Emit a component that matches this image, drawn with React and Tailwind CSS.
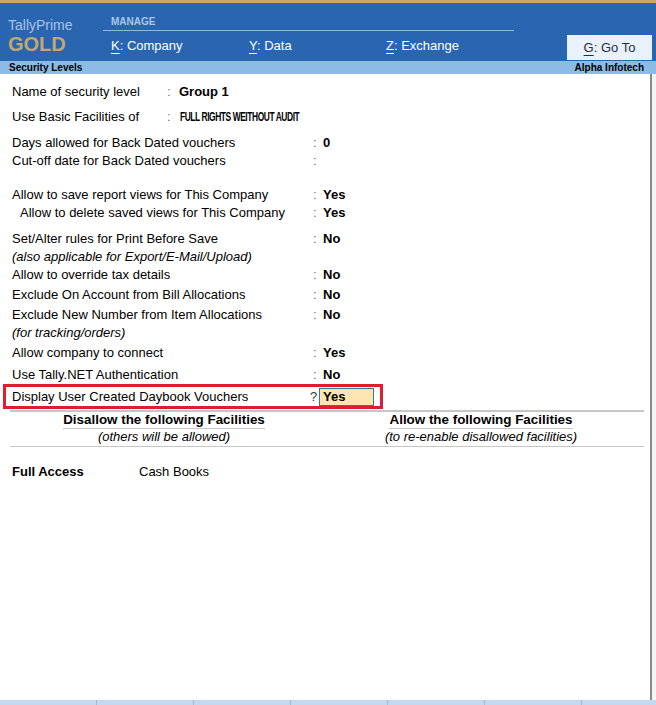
import React from "react";

const F = { fontFamily: '"Liberation Sans", Arial, sans-serif' };

function Key({ k, label, className = "" }) {
  return (
    <span className={"text-[13px] " + className}>
      <span className="underline underline-offset-[3px] decoration-[1px]">{k}</span>
      <span>:</span> {label}
    </span>
  );
}

function Row({ label, value, h = "h-[18px]", mt = "", indent = false }) {
  return (
    <div className={`flex items-center ${h} ${mt}`}>
      <div className={`w-[301px] whitespace-nowrap ${indent ? "pl-[20px]" : "pl-[12px]"}`}>{label}</div>
      <div className="w-[20px] text-gray-500 pl-[12px]">:</div>
      <div className="font-bold pl-[2px]">{value}</div>
    </div>
  );
}

export default function App() {
  return (
    <div style={F} className="w-[656px] h-[705px] bg-white text-[13px] text-black flex flex-col overflow-hidden">
      {/* gold top line */}
      <div className="h-[3px] bg-[#c8a865]" />
      {/* header */}
      <div className="h-[58px] bg-[#2a66b0] flex">
        <div className="w-[103px] pl-[8px] pt-[14px] flex flex-col">
          <div className="text-[14px] leading-[16px] text-[#a9c3e6]">TallyPrime</div>
          <div className="text-[20px] leading-[22px] font-bold text-[#c2a86e]">GOLD</div>
        </div>
        <div className="flex flex-col pt-[11px]">
          <div className="text-[10px] font-bold text-[#a9c6ec] pl-[8px] h-[17px] leading-[16px] w-[411px] border-b border-[#8cb8e8]">MANAGE</div>
          <div className="flex text-white pt-[5px]">
            <Key k="K" label="Company" className="w-[146px] pl-[8px]" />
            <Key k="Y" label="Data" className="w-[137px]" />
            <Key k="Z" label="Exchange" />
          </div>
        </div>
        <div className="flex-1" />
        <div className="flex flex-col justify-end pb-[1px] pr-[4px]">
          <div className="w-[85px] h-[25px] bg-[#e9f1fb] text-[#1f2f45] flex items-center justify-center">
            <Key k="G" label="Go To" />
          </div>
        </div>
      </div>
      {/* light bar */}
      <div className="h-[13px] bg-[#8cbbe5] flex items-center justify-between px-[9px] pr-[12px] text-[10px] font-bold leading-none">
        <span>Security Levels</span>
        <span>Alpha Infotech</span>
      </div>
      {/* body */}
      <div className="flex-1 flex">
        <div className="w-[652px] border-r-2 border-[#8a8a8a] pt-[9px] flex flex-col">
          <div className="flex items-center h-[18px]">
            <div className="w-[167px] pl-[12px]">Name of security level</div>
            <div className="w-[12px] text-gray-500">:</div>
            <div className="font-bold">Group 1</div>
          </div>
          <div className="flex items-center h-[18px] mt-[7px]">
            <div className="w-[167px] pl-[12px]">Use Basic Facilities of</div>
            <div className="w-[13px] text-gray-500">:</div>
            <div className="font-bold text-[12px] tracking-[-0.6px] inline-block origin-left scale-x-[0.7] whitespace-nowrap">FULL RIGHTS WEITHOUT AUDIT</div>
          </div>
          <Row label="Days allowed for Back Dated vouchers" value="0" mt="mt-[8px]" />
          <Row label="Cut-off date for Back Dated vouchers" value="" />
          <Row label="Allow to save report views for This Company" value="Yes" mt="mt-[16px]" />
          <Row label="Allow to delete saved views for This Company" value="Yes" indent />
          <Row label="Set/Alter rules for Print Before Save" value="No" mt="mt-[8px]" />
          <div className="h-[17px] flex items-center pl-[12px] italic">(also applicable for Export/E-Mail/Upload)</div>
          <Row label="Allow to override tax details" value="No" h="h-[20px]" />
          <Row label="Exclude On Account from Bill Allocations" value="No" h="h-[20px]" />
          <Row label="Exclude New Number from Item Allocations" value="No" h="h-[20px]" />
          <div className="h-[15px] flex items-center pl-[12px] italic">(for tracking/orders)</div>
          <Row label="Allow company to connect" value="Yes" mt="mt-[4px]" />
          <Row label="Use Tally.NET Authentication" value="No" mt="mt-[4px]" />
          <div className="ml-[3px] w-[380px] h-[25px] border-[3px] border-[#dc1f2b] flex items-center">
            <div className="w-[304px] pl-[6px] whitespace-nowrap">Display User Created Daybook Vouchers</div>
            <div className="w-[9px] text-[#333]">?</div>
            <div className="w-[55px] h-[18px] bg-[#fde5b2] border border-[#2f7a8e] font-bold flex items-center pl-[3px]">Yes</div>
          </div>
          <div className="ml-[10px] w-[634px] h-[2px] bg-[#c6c6c6] mt-[1px]" />
          <div className="ml-[10px] w-[634px] flex border-b border-[#c6c6c6] pb-[1px]">
            <div className="w-[308px] flex flex-col items-center">
              <div className="font-bold text-[13.4px] leading-[16px] border-b border-[#c6c6c6]">Disallow the following Facilities</div>
              <div className="italic leading-[16px]">(others will be allowed)</div>
            </div>
            <div className="w-[326px] flex flex-col items-center">
              <div className="font-bold text-[13.4px] leading-[16px] border-b border-[#c6c6c6]">Allow the following Facilities</div>
              <div className="italic leading-[16px]">(to re-enable disallowed facilities)</div>
            </div>
          </div>
          <div className="flex items-center h-[18px] mt-[16px]">
            <div className="w-[139px] pl-[12px] font-bold">Full Access</div>
            <div>Cash Books</div>
          </div>
        </div>
        <div className="flex-1 bg-[#f4f4f4]" />
      </div>
      {/* bottom strip */}
      <div className="h-[5px] bg-[#c2d9ef] flex">
        <div className="w-[97px] border-r border-[#9cbcdc]" />
        <div className="w-[97px] border-r border-[#9cbcdc]" />
        <div className="w-[97px] border-r border-[#9cbcdc]" />
        <div className="w-[97px] border-r border-[#9cbcdc]" />
        <div className="w-[97px] border-r border-[#9cbcdc]" />
        <div className="w-[97px] border-r border-[#9cbcdc]" />
      </div>
    </div>
  );
}
